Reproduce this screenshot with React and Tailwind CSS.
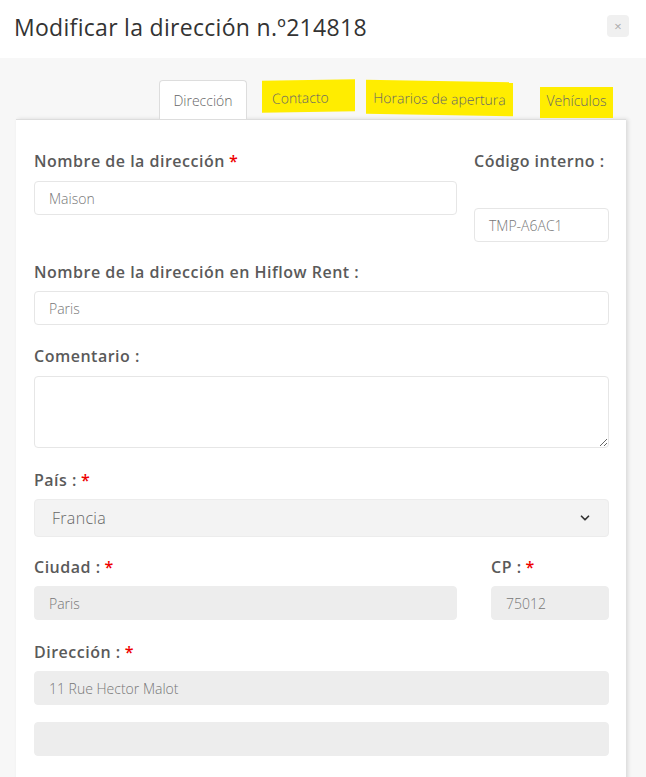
import { ChevronDown } from 'lucide-react'

const FONT = { fontFamily: '"Open Sans", "Noto Sans", sans-serif' }

function Label({ children, required }) {
  return (
    <label className="block text-[16px] font-semibold text-[#5a5a5a] leading-5 tracking-[0.5px]">
      {children}
      {required && <span className="text-[#e00] ml-1">*</span>}
    </label>
  )
}

function Input({ value, disabled, className = '' }) {
  return (
    <div
      className={`h-[34px] rounded border border-[#e6e6e6] px-[14px] flex items-center text-[14px] font-light text-[#777] ${
        disabled ? 'bg-[#ededed] border-[#ededed]' : 'bg-white'
      } ${className}`}
    >
      {value}
    </div>
  )
}

export default function App() {
  return (
    <div className="w-[646px] h-[777px] overflow-hidden bg-[#f7f7f7]" style={FONT}>
      {/* Header */}
      <div className="h-[58px] bg-white flex items-center justify-between pl-[14px] pr-[17px] pb-[3px]">
        <h2 className="text-[23px] text-[#333] tracking-[0.3px]">Modificar la dirección n.º214818</h2>
        <button className="w-[22px] h-[22px] rounded-sm bg-[#f0f0f0] text-[#aaa] text-[13px] leading-none flex items-center justify-center -mt-[3px]">
          ×
        </button>
      </div>

      {/* Tabs */}
      <div className="flex items-end pt-[22px] pl-[159px] h-[61px]">
        <div className="w-[88px] h-[39px] bg-white border border-b-0 border-[#ddd] rounded-t flex items-center justify-center text-[14px] font-light text-[#666]">
          Dirección
        </div>
        <div className="ml-[15px] mb-[7px] w-[93px] h-[32px] bg-[#ffed00] flex items-center pl-[10px] pt-[3px] text-[14px] font-light text-[#666] -skew-y-1">
          Contacto
        </div>
        <div className="ml-[11px] mb-[4px] w-[147px] h-[34px] bg-[#ffed00] flex items-center justify-center text-[14px] font-light text-[#666] skew-y-1">
          Horarios de apertura
        </div>
        <div className="ml-[27px] mb-[1px] w-[73px] h-[31px] bg-[#ffed00] flex items-center justify-center pb-[4px] text-[14px] font-light text-[#666]">
          Vehículos
        </div>
      </div>

      {/* Card */}
      <div className="ml-[16px] w-[610px] bg-white border-t border-[#ddd] shadow-[2px_0_4px_rgba(0,0,0,0.12)] pl-[18px] pr-[17px] pt-[31px] pb-8 h-[700px]">
        <div className="flex gap-[17px]">
          <div className="flex-1">
            <Label required>Nombre de la dirección</Label>
            <Input value="Maison" className="mt-[10px]" />
          </div>
          <div className="w-[135px]">
            <Label>Código interno :</Label>
            <Input value="TMP-A6AC1" className="mt-[37px]" />
          </div>
        </div>

        <div className="mt-[20px]">
          <Label>Nombre de la dirección en Hiflow Rent :</Label>
          <Input value="Paris" className="mt-[9px]" />
        </div>

        <div className="mt-[21px]">
          <Label>Comentario :</Label>
          <textarea className="mt-[10px] block w-full h-[72px] rounded border border-[#e6e6e6] bg-white resize-y" />
        </div>

        <div className="mt-[22px]">
          <Label required>País :</Label>
          <div className="mt-[9px] h-[38px] rounded bg-[#f3f3f3] border border-[#ececec] flex items-center justify-between pl-[17px] pr-[16px] text-[16px] font-light text-[#666] tracking-[0.3px]">
            Francia
            <ChevronDown className="w-[14px] h-[14px] text-[#333]" strokeWidth={3} />
          </div>
        </div>

        <div className="flex gap-[34px] mt-[20px]">
          <div className="flex-1">
            <Label required>Ciudad :</Label>
            <Input value="Paris" disabled className="mt-[9px]" />
          </div>
          <div className="w-[118px]">
            <Label required>CP :</Label>
            <Input value="75012" disabled className="mt-[9px]" />
          </div>
        </div>

        <div className="mt-[22px]">
          <Label required>Dirección :</Label>
          <Input value="11 Rue Hector Malot" disabled className="mt-[9px]" />
          <Input value="" disabled className="mt-[17px]" />
        </div>
      </div>
    </div>
  )
}
